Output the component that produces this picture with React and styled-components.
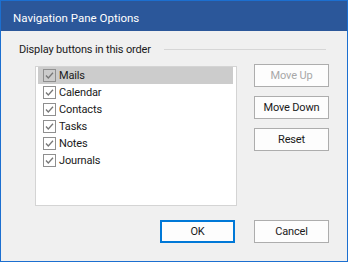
import styled, { createGlobalStyle } from 'styled-components'

const GlobalStyle = createGlobalStyle`
  html, body {
    margin: 0;
    padding: 0;
    background: #ffffff;
  }
  body {
    font-family: Roboto, "Noto Sans", "Liberation Sans", sans-serif;
    font-size: 11px;
    letter-spacing: -0.15px;
    color: #000;
  }
`;

const Window = styled.div`
  width: 348px;
  height: 262px;
  box-sizing: border-box;
  border: 1px solid #1c6fd0;
  background: #f0f0f0;
  display: flex;
  flex-direction: column;
`;

const TitleBar = styled.div`
  height: 30px;
  flex: 0 0 30px;
  box-sizing: border-box;
  background: #2b579a;
  color: #ffffff;
  display: flex;
  align-items: center;
  padding: 4px 0 0 12px;
  font-size: 11.5px;
  letter-spacing: 0;
`;

const Body = styled.div`
  flex: 1;
  display: flex;
  flex-direction: column;
`;

const GroupHeader = styled.div`
  display: flex;
  align-items: center;
  height: 14px;
  margin: 11px 21px 0 18px;
  color: #1a1a1a;
`;

const GroupRule = styled.div`
  flex: 1;
  height: 1px;
  background: #d6d6d6;
  margin-left: 13px;
`;

const Content = styled.div`
  display: flex;
  align-items: flex-start;
  margin: 10px 0 0 34px;
`;

const ListBox = styled.div`
  width: 202px;
  height: 140px;
  box-sizing: border-box;
  border: 1px solid #d4d4d4;
  background: #ffffff;
  padding: 0 3px 0 2px;
`;

const Row = styled.div`
  height: 17px;
  display: flex;
  align-items: center;
  padding-left: 5px;
  background: ${p => (p.$selected ? '#cccccc' : 'transparent')};
  color: #1a1a1a;
`;

const Label = styled.span`
  margin-left: 3px;
`;

const ButtonColumn = styled.div`
  display: flex;
  flex-direction: column;
  gap: 9px;
  margin-left: 17px;
  margin-top: -2px;
`;

const Button = styled.div`
  width: 75px;
  height: 23px;
  box-sizing: border-box;
  border: 1px solid ${p => (p.$default ? '#0078d7' : '#adadad')};
  box-shadow: ${p => (p.$default ? 'inset 0 0 0 1px #0078d7' : 'none')};
  background: #fdfdfd;
  display: flex;
  align-items: center;
  justify-content: center;
  color: ${p => (p.$disabled ? '#a8a8a8' : '#1a1a1a')};
`;

const Footer = styled.div`
  display: flex;
  justify-content: flex-end;
  gap: 19px;
  margin: 14px 18px 0 0;
`;

const CheckBox = () => (
  <svg width="13" height="13" viewBox="0 0 13 13">
    <rect x="0.5" y="0.5" width="12" height="12" fill="none" stroke="#8f8f8f" />
    <path d="M3 6.5 L5.3 9 L10 3.8" fill="none" stroke="#777777" strokeWidth="1.3" />
  </svg>
);

const items = ['Mails', 'Calendar', 'Contacts', 'Tasks', 'Notes', 'Journals'];

export default function App() {
  return (
    <>
      <GlobalStyle />
      <Window>
        <TitleBar>Navigation Pane Options</TitleBar>
        <Body>
          <GroupHeader>
            Display buttons in this order
            <GroupRule />
          </GroupHeader>
          <Content>
            <ListBox>
              {items.map((item, i) => (
                <Row key={item} $selected={i === 0}>
                  <CheckBox />
                  <Label>{item}</Label>
                </Row>
              ))}
            </ListBox>
            <ButtonColumn>
              <Button $disabled>Move Up</Button>
              <Button>Move Down</Button>
              <Button>Reset</Button>
            </ButtonColumn>
          </Content>
          <Footer>
            <Button $default>OK</Button>
            <Button>Cancel</Button>
          </Footer>
        </Body>
      </Window>
    </>
  );
}
